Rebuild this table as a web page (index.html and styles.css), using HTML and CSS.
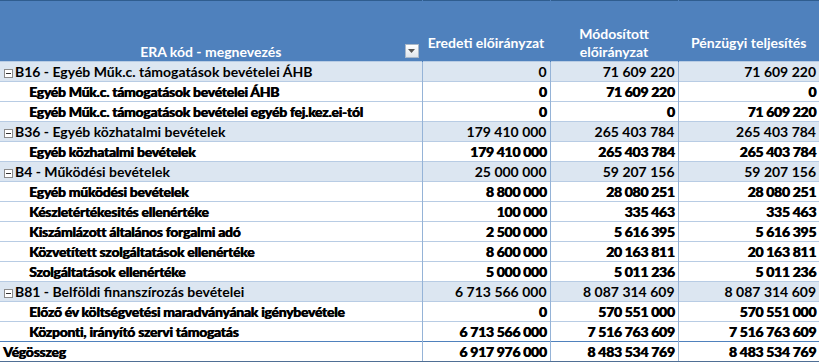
FILE: index.html
```html
<!DOCTYPE html>
<html lang="hu">
<head>
<meta charset="utf-8">
<link rel="stylesheet" href="styles.css">
</head>
<body>
<table class="pivot">
  <colgroup>
    <col class="c1"><col class="c2"><col class="c3"><col class="c4">
  </colgroup>
  <thead>
    <tr class="head">
      <th class="h-name"><span class="h-label">ERA kód - megnevezés</span><span class="dd"><svg width="7" height="4" viewBox="0 0 7 4"><path d="M0 0h7L3.5 4z" fill="#555"/></svg></span></th>
      <th class="h-num">Eredeti előirányzat</th>
      <th class="h-num">Módosított<br>előirányzat</th>
      <th class="h-num">Pénzügyi teljesítés</th>
    </tr>
  </thead>
  <tbody>
    <tr class="grp"><td><span class="tog"></span>B16 - Egyéb Műk.c. támogatások bevételei ÁHB</td><td>0</td><td>71 609 220</td><td>71 609 220</td></tr>
    <tr class="item"><td>Egyéb Műk.c. támogatások bevételei ÁHB</td><td>0</td><td>71 609 220</td><td>0</td></tr>
    <tr class="item"><td>Egyéb Műk.c. támogatások bevételei egyéb fej.kez.ei-tól</td><td>0</td><td>0</td><td>71 609 220</td></tr>
    <tr class="grp"><td><span class="tog"></span>B36 - Egyéb közhatalmi bevételek</td><td>179 410 000</td><td>265 403 784</td><td>265 403 784</td></tr>
    <tr class="item"><td>Egyéb közhatalmi bevételek</td><td>179 410 000</td><td>265 403 784</td><td>265 403 784</td></tr>
    <tr class="grp"><td><span class="tog"></span>B4 - Működési bevételek</td><td>25 000 000</td><td>59 207 156</td><td>59 207 156</td></tr>
    <tr class="item"><td>Egyéb működési bevételek</td><td>8 800 000</td><td>28 080 251</td><td>28 080 251</td></tr>
    <tr class="item"><td>Készletértékesités ellenértéke</td><td>100 000</td><td>335 463</td><td>335 463</td></tr>
    <tr class="item"><td>Kiszámlázott általános forgalmi adó</td><td>2 500 000</td><td>5 616 395</td><td>5 616 395</td></tr>
    <tr class="item"><td>Közvetített szolgáltatások ellenértéke</td><td>8 600 000</td><td>20 163 811</td><td>20 163 811</td></tr>
    <tr class="item"><td>Szolgáltatások ellenértéke</td><td>5 000 000</td><td>5 011 236</td><td>5 011 236</td></tr>
    <tr class="grp"><td><span class="tog"></span>B81 - Belföldi finanszírozás bevételei</td><td>6 713 566 000</td><td>8 087 314 609</td><td>8 087 314 609</td></tr>
    <tr class="item"><td>Előző év költségvetési maradványának igénybevétele</td><td>0</td><td>570 551 000</td><td>570 551 000</td></tr>
    <tr class="item"><td>Központi, irányító szervi támogatás</td><td>6 713 566 000</td><td>7 516 763 609</td><td>7 516 763 609</td></tr>
    <tr class="total"><td>Végösszeg</td><td>6 917 976 000</td><td>8 483 534 769</td><td>8 483 534 769</td></tr>
  </tbody>
</table>
</body>
</html>
```

FILE: styles.css
```css
html, body {
  margin: 0;
  padding: 0;
  background: #ffffff;
}

.pivot {
  border-collapse: collapse;
  table-layout: fixed;
  width: 819px;
  font-family: Lato, "Open Sans", sans-serif;
  font-size: 14px;
  color: #000;
  border-top: 1px solid #2f5d8f;
}

.c1 { width: 422px; }
.c2 { width: 128px; }
.c3 { width: 128px; }
.c4 { width: 141px; }

.head {
  height: 61px;
}

.head th {
  background: #4f81bd;
  color: #ffffff;
  font-weight: 700;
  padding: 0;
  font-size: 14px;
  line-height: 18px;
}

.h-name {
  position: relative;
  vertical-align: bottom;
  text-align: center;
}

.h-label {
  display: block;
  padding-bottom: 0;
}

.dd {
  position: absolute;
  right: 3px;
  bottom: 3px;
  width: 14px;
  height: 14px;
  box-sizing: border-box;
  border: 1px solid #a9b8c9;
  background: linear-gradient(#ffffff, #dfe5ec);
  display: flex;
  align-items: center;
  justify-content: center;
}

.head th.h-num {
  vertical-align: middle;
  text-align: center;
  padding-top: 23px;
  border-left: 1px solid #4f81bd;
}

tbody td {
  height: 19px;
  padding: 0 3px 0 4px;
  border-top: 1px solid #b8cce4;
  border-left: 1px solid #95b3d7;
  text-align: right;
  white-space: nowrap;
  line-height: 19px;
}

tbody td:first-child {
  text-align: left;
  border-left: none;
}

.grp td {
  background: #dce6f1;
  font-weight: 700;
}

.grp td:first-child {
  padding-left: 4px;
}

.item td {
  font-weight: 900;
  letter-spacing: -0.3px;
  text-shadow: 0.5px 0 0 #000;
}

.item td:first-child {
  padding-left: 29px;
}

.total td {
  font-weight: 900;
  letter-spacing: -0.3px;
  text-shadow: 0.5px 0 0 #000;
  border-top: 1px solid #4f81bd;
  border-bottom: 3px solid #4f6f95;
}

.total td:first-child {
  padding-left: 3px;
}

.tog {
  display: inline-block;
  position: relative;
  width: 9px;
  height: 9px;
  box-sizing: border-box;
  border: 1px solid #8a8a8a;
  background: #ffffff;
  margin-right: 2px;
  vertical-align: -1px;
}

.tog::after {
  content: "";
  position: absolute;
  left: 1px;
  right: 1px;
  top: 3px;
  height: 1px;
  background: #333;
}
```
